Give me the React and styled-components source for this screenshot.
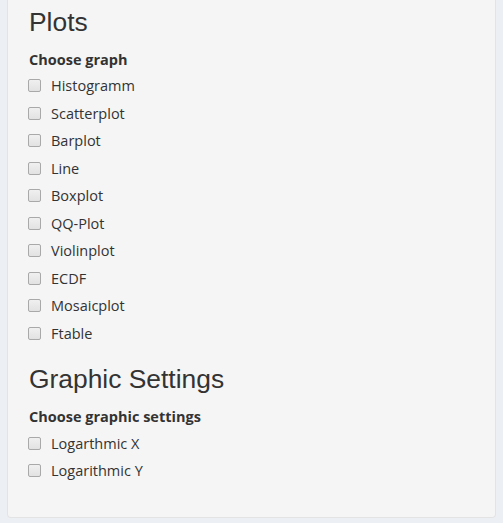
import React from 'react';
import styled, { createGlobalStyle } from 'styled-components';

const GlobalStyle = createGlobalStyle`
  html, body {
    margin: 0;
    padding: 0;
    background: #ecf0f5;
  }
  body {
    padding: 0 7px 5px 7px;
    font-family: "Open Sans", "Noto Sans", sans-serif;
    color: #333;
  }
`;

const Well = styled.div`
  width: 489px;
  box-sizing: border-box;
  background: #f5f5f5;
  border: 1px solid #e3e3e3;
  border-top: none;
  border-radius: 0 0 4px 4px;
  padding: 6.5px 21px 32px 21px;
`;

const Heading = styled.h3`
  margin: ${p => (p.$first ? '0' : '17px')} 0 0 0;
  font-family: "Liberation Sans", Arial, sans-serif;
  font-weight: 400;
  font-size: 26.4px;
  line-height: 30px;
  height: 30px;
  color: #333;
`;

const GroupLabel = styled.div`
  margin: 12px 0 1.5px 0;
  font-weight: 700;
  font-size: 14.5px;
  line-height: 22px;
`;

const Options = styled.div`
  display: flex;
  flex-direction: column;
`;

const Option = styled.label`
  display: flex;
  align-items: center;
  height: 27.5px;
  font-size: 14.5px;
  cursor: pointer;
`;

const Box = styled.input.attrs({ type: 'checkbox' })`
  appearance: none;
  margin: 0 10px 0 -1px;
  width: 13px;
  height: 13px;
  box-sizing: border-box;
  border: 1px solid #a9a9a9;
  border-radius: 2px;
  background: linear-gradient(#f0f0f0, #e2e2e2);
  flex: none;
`;

const graphs = [
  'Histogramm',
  'Scatterplot',
  'Barplot',
  'Line',
  'Boxplot',
  'QQ-Plot',
  'Violinplot',
  'ECDF',
  'Mosaicplot',
  'Ftable',
];

const settings = ['Logarthmic X', 'Logarithmic Y'];

const Group = ({ title, label, items, first }) => (
  <>
    <Heading $first={first}>{title}</Heading>
    <GroupLabel>{label}</GroupLabel>
    <Options>
      {items.map(item => (
        <Option key={item}>
          <Box />
          {item}
        </Option>
      ))}
    </Options>
  </>
);

const App = () => (
  <>
    <GlobalStyle />
    <Well>
      <Group first title="Plots" label="Choose graph" items={graphs} />
      <Group title="Graphic Settings" label="Choose graphic settings" items={settings} />
    </Well>
  </>
);

export default App;
